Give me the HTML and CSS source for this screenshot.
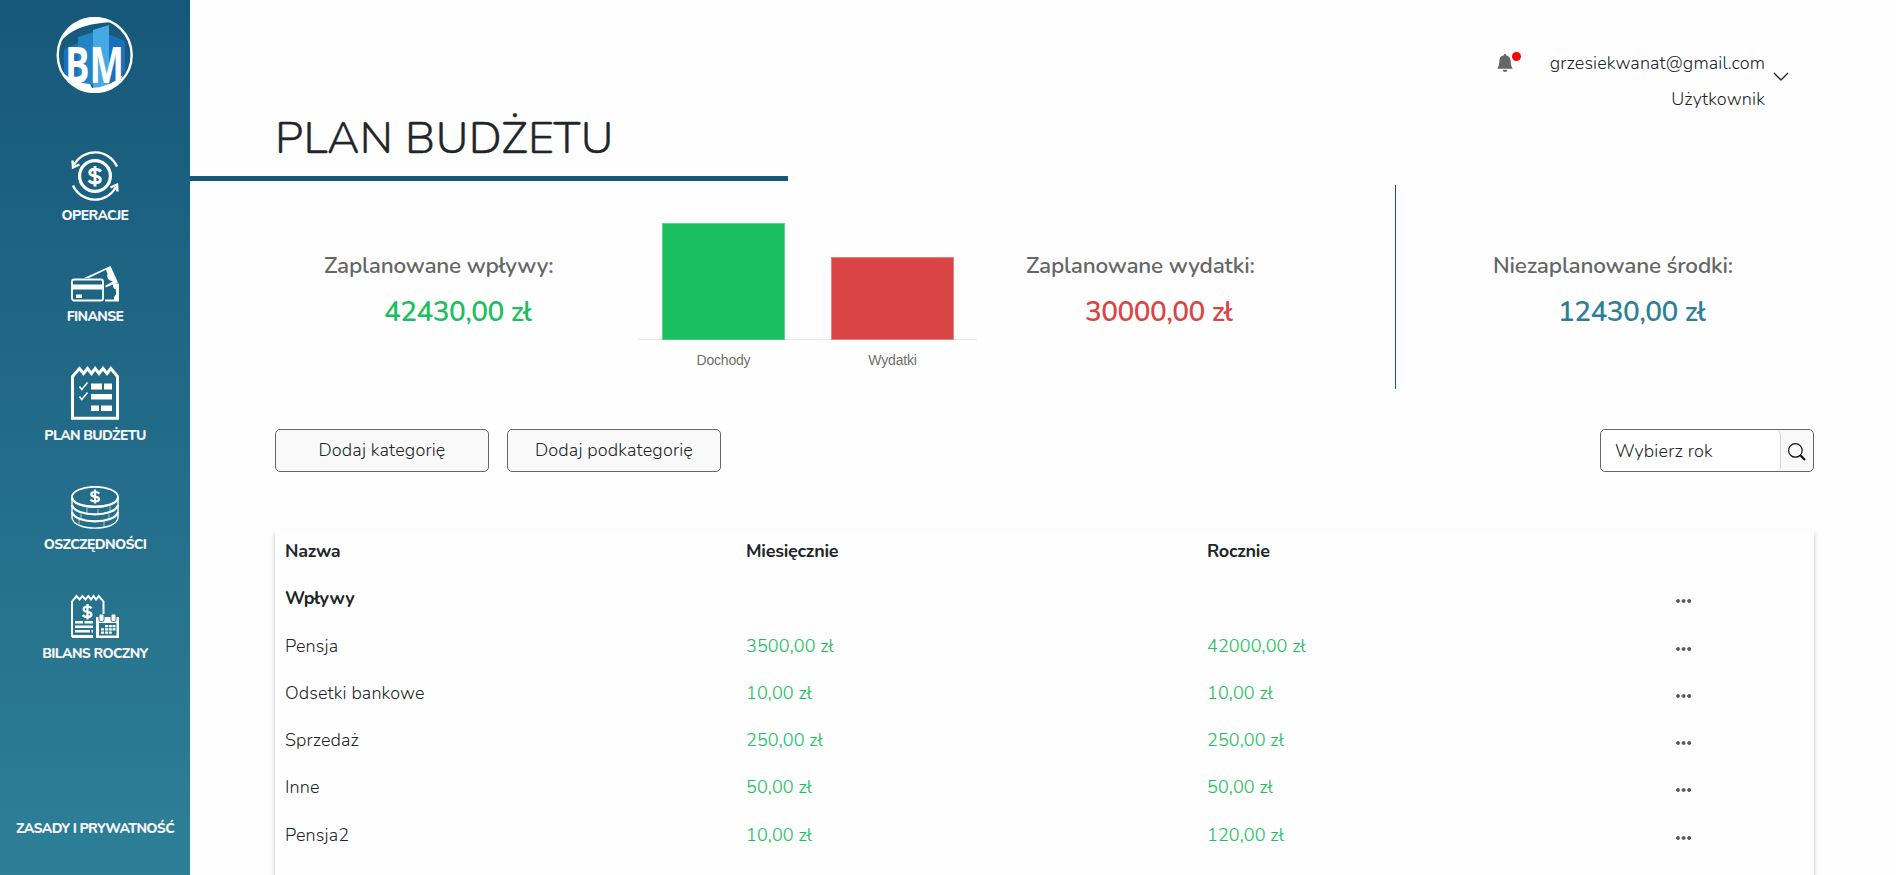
FILE: index.html
```html
<!DOCTYPE html>
<html lang="pl">
<head>
<meta charset="utf-8">
<title>Plan budżetu</title>
<link rel="stylesheet" href="styles.css">
</head>
<body>
<div class="app">
  <nav class="sidebar">
    <svg class="logo" viewBox="0 0 78 76">
      <path fill="#1a70bd" d="M8 32 L22 26 V62 H8Z"/>
      <path fill="#2184c4" d="M22 20 L38 15 V68 H22Z"/>
      <path fill="#1a70bd" d="M52 17 L69 24 V55 L52 68Z"/>
      <path fill="#45aae4" d="M37 13 L53 8 V71 H37Z"/>
      <circle cx="38.700" cy="38" r="37" fill="none" stroke="#fff" stroke-width="2.4"/>
      <path fill="#fff" d="M5 24 C12 5 33 -5 57 5 C40 6 19 8 5 24Z"/>
      <path fill="#fff" d="M7 56 Q20 67 34 67 L36 71 Q54 70 67 58 Q59 74 39 75 Q18 75 7 56Z"/>
      <text class="logo-text" x="9" y="66" textLength="59" lengthAdjust="spacingAndGlyphs">BM</text>
    </svg>
    <a class="nav-item operations">
      <svg class="icon" viewBox="0 0 48 50" width="48" height="50" fill="none" stroke="#fff">
        <circle cx="24" cy="25" r="15.4" stroke-width="3.2"/>
        <path stroke-width="2.4" d="M46 15.5 A24 24 0 0 0 3 14 M2 34.5 A24 24 0 0 0 45 36"/>
        <path stroke-width="2.4" d="M1.5 9.5 L2 16.5 L8.5 13.5 M39.5 36.5 L46 33.5 L46.5 40.5"/>
        <path stroke-width="2.9" d="M30 20.5 Q28 18.3 24 18.3 Q18.8 18.3 18.8 21.5 Q18.8 24.4 24 25 Q29.4 25.8 29.4 28.6 Q29.4 32 24 32 Q20 32 17.6 29.4 M24 15 V35.5"/>
      </svg>
      <span>OPERACJE</span>
    </a>
    <a class="nav-item finance">
      <svg class="icon" viewBox="0 0 48 36" width="48" height="36">
        <path fill="#fff" d="M13 12 L39.500 0 L47 16.500 L34.500 21.500 L34.500 19.500 L42 15.500 Q35 14 36.500 8 L35 3.700 L18 12Z"/>
        <path fill="#fff" d="M42 17.5 L48 17.5 V35.500 H34 V33.500 L43 33.500 Q42.5 30.500 45 28.500 V23.500 Q42 22.500 42 19.500Z"/>
        <rect x="1" y="13.5" width="31" height="21" rx="2" fill="none" stroke="#fff" stroke-width="1.8"/>
        <path fill="#fff" d="M1 18.5 H32 V23.5 H1Z M5 28.5 H11 V32 H5Z"/>
      </svg>
      <span>FINANSE</span>
    </a>
    <a class="nav-item budget">
      <svg class="icon" viewBox="0 0 48 54" width="48" height="54">
        <path fill="none" stroke="#fff" stroke-width="3" d="M1.5 52.3 V10.5 L8.5 2.5 L12.5 7.5 L16.5 2.5 L20.5 7.5 L24.2 2.5 L28 7.5 L32 2.5 L36 7.5 L39.8 2.5 L46.5 10.5 V52.3Z"/>
        <path fill="#fff" d="M20 17.5H31V23.5H20Z M33 17.5H41V23.5H33Z M20 28H41V33.5H20Z M20 39.5H28V45H20Z M30 39.5H41V45H30Z"/>
        <path fill="none" stroke="#fff" stroke-width="1.5" d="M8.5 20.5 L10.8 23.5 L16.5 16.5 M8.5 30.5 L10.8 33.5 L16.5 26.5"/>
      </svg>
      <span>PLAN BUDŻETU</span>
    </a>
    <a class="nav-item savings">
      <svg class="icon" viewBox="0 0 48 43" width="48" height="43" fill="none" stroke="#fff">
        <ellipse cx="24" cy="11" rx="23" ry="10.2" stroke-width="1.8"/>
        <path stroke-width="2.2" d="M1 12 C3 23.5 45 23.5 47 12"/>
        <path stroke-width="1.4" d="M1 11 V32 M47 11 V32 M1 32 C3 45.5 45 45.5 47 32"/>
        <path stroke-width="2.2" d="M1 19 C4 31.5 44 31.5 47 19 M1 26 C4 38.5 44 38.5 47 26"/>
        <path stroke-width=".6" d="M16 22 V28 M27 23 V28 M39 20 V26 M10 28 V33 M38 28 V33 M8 33 V38 M33 35 V41"/>
        <path stroke-width="2.2" d="M28.3 7.5 Q27 6 24 6 Q20.3 6 20.3 8.2 Q20.3 10.2 24 10.7 Q28 11.2 28 13.2 Q28 15.4 24 15.4 Q21 15.4 19.3 13.7 M24 3.5 V17.5"/>
      </svg>
      <span>OSZCZĘDNOŚCI</span>
    </a>
    <a class="nav-item balance">
      <svg class="icon" viewBox="0 0 48 44" width="48" height="44">
        <path fill="none" stroke="#fff" stroke-width="2" d="M22 42 H1 V7.5 L5.5 2 L8.5 5.5 L11.5 2 L14.5 5.5 L17.3 2 L20 5.5 L22.5 2 L25 5.5 L27.8 2 L32.5 7.5 V20"/>
        <path fill="#fff" d="M1 41H22V44H1Z M4 27H12V29.5H4Z M13.5 27H22V29.5H13.5Z M4 31.5H22V34H4Z M4 36H19V38.5H4Z M20.5 36H22V38.5H20.5Z"/>
        <path fill="none" stroke="#fff" stroke-width="2.3" d="M20.7 14.3 Q19.3 12.7 16.5 12.7 Q12.7 12.7 12.7 15.2 Q12.7 17.3 16.5 17.8 Q20.4 18.4 20.4 20.5 Q20.4 23 16.5 23 Q13.5 23 11.7 21.1 M16.5 10 V25.5"/>
        <path fill="#fff" fill-rule="evenodd" d="M25 23 H48 V44 H25Z M28 29 H45.5 V41.5 H28Z"/>
        <rect x="28" y="20" width="5" height="7.5" rx="1.5" fill="#fff" stroke="#28738f" stroke-width="1"/>
        <rect x="40" y="20" width="5" height="7.5" rx="1.5" fill="#fff" stroke="#28738f" stroke-width="1"/>
        <path fill="#fff" d="M34 31h3v2.3h-3z M37.8 31h3v2.3h-3z M41.5 31h3v2.3h-3z M30 34.2h3v2.3h-3z M34 34.2h3v2.3h-3z M37.8 34.2h3v2.3h-3z M41.5 34.2h3v2.3h-3z M30 37.5h3v2.3h-3z M34 37.5h3v2.3h-3z M37.8 37.5h3v2.3h-3z"/>
      </svg>
      <span>BILANS ROCZNY</span>
    </a>
    <a class="privacy">ZASADY I PRYWATNOŚĆ</a>
  </nav>

  <main class="main">
    <header class="header">
      <h1 class="title">PLAN BUDŻETU</h1>
      <div class="user">
        <div class="bell">
          <svg viewBox="0 0 16 16" width="18" height="18" fill="#666"><path d="M8 16a2 2 0 0 0 2-2H6a2 2 0 0 0 2 2m.995-14.901a1 1 0 1 0-1.99 0A5 5 0 0 0 3 6c0 1.098-.5 6-2 7h14c-1.500-1-2-5.902-2-7 0-2.420-1.720-4.440-4.005-4.901"/></svg>
          <i class="dot"></i>
        </div>
        <div class="user-name">
          <span class="email">grzesiekwanat@gmail.com</span>
          <span class="role">Użytkownik</span>
        </div>
        <svg class="chevron" viewBox="0 0 16 9" width="16" height="9" fill="none" stroke="#222" stroke-width="1.3"><path d="M1 1 L8 8 L15 1"/></svg>
      </div>
    </header>

    <section class="summary">
      <div class="card income">
        <span class="label">Zaplanowane wpływy:</span>
        <span class="amount">42430,00 zł</span>
      </div>
      <div class="chart">
        <div class="bars"><div class="bar bar-in"></div><div class="bar bar-out"></div></div>
        <div class="axis"><span>Dochody</span><span>Wydatki</span></div>
      </div>
      <div class="card expense">
        <span class="label">Zaplanowane wydatki:</span>
        <span class="amount">30000,00 zł</span>
      </div>
      <div class="card free">
        <span class="label">Niezaplanowane środki:</span>
        <span class="amount">12430,00 zł</span>
      </div>
    </section>

    <section class="actions">
      <button class="btn">Dodaj kategorię</button>
      <button class="btn">Dodaj podkategorię</button>
      <div class="search">
        <div class="field">Wybierz rok</div>
        <svg class="glass" viewBox="0 0 18 18" width="18" height="18" fill="none" stroke="#111"><circle cx="7.400" cy="7.400" r="6.800" stroke-width="1.200"/><path stroke-width="2.200" d="M12.300 12.300 L17 17"/></svg>
      </div>
    </section>

    <section class="table">
      <div class="row head"><span>Nazwa</span><span>Miesięcznie</span><span>Rocznie</span></div>
      <div class="row group"><span>Wpływy</span><span></span><span></span><i class="more"></i></div>
      <div class="row"><span>Pensja</span><span class="sum">3500,00 zł</span><span class="sum">42000,00 zł</span><i class="more"></i></div>
      <div class="row"><span>Odsetki bankowe</span><span class="sum">10,00 zł</span><span class="sum">10,00 zł</span><i class="more"></i></div>
      <div class="row"><span>Sprzedaż</span><span class="sum">250,00 zł</span><span class="sum">250,00 zł</span><i class="more"></i></div>
      <div class="row"><span>Inne</span><span class="sum">50,00 zł</span><span class="sum">50,00 zł</span><i class="more"></i></div>
      <div class="row"><span>Pensja2</span><span class="sum">10,00 zł</span><span class="sum">120,00 zł</span><i class="more"></i></div>
    </section>
  </main>
</div>
</body>
</html>
```
FILE: styles.css
```css
* { box-sizing: border-box; }
body {
  margin: 0;
  height: 875px;
  overflow: hidden;
  background: #fefefe;
  color: #212529;
  font-family: Nunito, "Open Sans", "Noto Sans", sans-serif;
  font-weight: 300;
  font-size: 18px;
  letter-spacing: .12px;
}
.app { display: flex; height: 875px; overflow: hidden; }

.sidebar {
  flex: 0 0 190px;
  display: flex;
  flex-direction: column;
  align-items: center;
  padding-top: 17px;
  background: linear-gradient(#17587a, #2d7f97);
  color: #f4f4f4;
  font-size: 14px;
  font-weight: 800;
  letter-spacing: -.65px;
  white-space: nowrap;
}
.logo { width: 78px; height: 76px; margin-right: 1px; }
.logo-text { font: 700 50px "Open Sans", sans-serif; fill: #fff; letter-spacing: 0; }
.nav-item { display: flex; flex-direction: column; align-items: center; gap: 5px; line-height: 20px; }
.icon { display: block; }
.operations { margin-top: 58px; }
.finance { margin-top: 40px; }
.budget { margin-top: 39px; gap: 6px; }
.savings { margin-top: 40px; gap: 6px; }
.balance { margin-top: 39px; gap: 6px; }
.privacy { margin-top: 155px; line-height: 20px; }

.main { flex: 1; min-width: 0; }
.header { display: flex; justify-content: space-between; height: 181px; }
.title {
  margin: 0;
  width: 598px;
  padding: 109px 0 0 85px;
  border-bottom: 5px solid #17587a;
  font-size: 45px;
  line-height: 60px;
  font-weight: 300;
  letter-spacing: .4px;
  -webkit-text-stroke: .4px currentColor;
  white-space: nowrap;
}
.user { display: flex; padding: 45px 107px 0 0; }
.bell { position: relative; margin: 9px 36px 0 0; width: 18px; height: 18px; }
.dot { position: absolute; left: 16px; top: -2px; width: 9px; height: 9px; border-radius: 50%; background: red; }
.user-name { display: flex; flex-direction: column; align-items: flex-end; line-height: 36px; font-size: 18px; }
.chevron { margin: 27px 0 0 8px; }

.summary { display: flex; height: 204px; margin-top: 4px; padding-left: 85px; }
.card { display: flex; flex-direction: column; color: #666; font-weight: 600; white-space: nowrap; }
.label { margin-top: 65px; font-size: 22.5px; line-height: 32px; letter-spacing: -.18px; }
.amount { margin-top: 11px; font-size: 28px; line-height: 38px; letter-spacing: -.55px; }
.income { width: 363px; padding-left: 49px; }
.expense { width: 418px; padding-left: 49px; }
.free { flex: 1; padding-left: 97px; border-left: 1px solid #17587a; }
.card .amount { padding-left: 60px; }
.expense .amount { padding-left: 59px; }
.free .amount { padding-left: 65px; }
.income .amount { color: #1bbf60; }
.expense .amount { color: #d94545; }
.free .amount { color: #2d7f97; }
.chart { width: 339px; padding-top: 38px; }
.bars { display: flex; align-items: flex-end; gap: 46px; height: 117px; padding-left: 24px; border-bottom: 1px solid #e5e5e5; }
.bar { width: 123px; margin-bottom: -1px; }
.bar-in { height: 117px; background: #1ac060; border: 1px solid #62d391; border-bottom-color: #48cb80; }
.bar-out { height: 83px; background: #d94545; border: 1px solid #e58080; }
.axis { display: flex; color: #707070; font: 400 14px/20px "Liberation Sans", sans-serif; padding: 10px 0 0 1px; letter-spacing: -.2px; }
.axis span { width: 169px; text-align: center; }

.actions { display: flex; gap: 18px; margin: 40px 82px 0 85px; height: 43px; }
.btn {
  width: 214px;
  padding: 0 0 1px;
  border: 1px solid #666;
  border-radius: 5px;
  background: #f9f9f9;
  color: #212529;
  font: inherit;
  letter-spacing: .15px;
}
.search { display: flex; width: 214px; margin-left: auto; border: 1px solid #666; border-radius: 5px; background: #f9f9f9; }
.field { width: 180px; padding: 1px 0 0 14px; line-height: 40px; letter-spacing: .2px; border: 1px solid #ced4da; border-width: 0 1px 0 0; border-radius: 5px; background: #fff; }
.glass { margin: 13px 0 0 7px; }

.table { margin: 58px 82px 0 85px; height: 420px; padding-top: 1px; box-shadow: 0 3px 4px rgba(0, 0, 0, .25); }
.row { display: grid; grid-template-columns: 461px 461px 418px 1fr; height: 47.25px; padding: 0 0 0 10px; line-height: 41px; }
.head, .group { font-weight: 700; letter-spacing: -.25px; }
.sum { color: #1bbf60; -webkit-text-stroke: .15px currentColor; }
.more { width: 15px; height: 4px; margin: 21px 0 0 51px; background: radial-gradient(circle at 2px 2px, #555 1.5px, transparent 2.2px) 0 0 / 5.6px 4px; }
```
